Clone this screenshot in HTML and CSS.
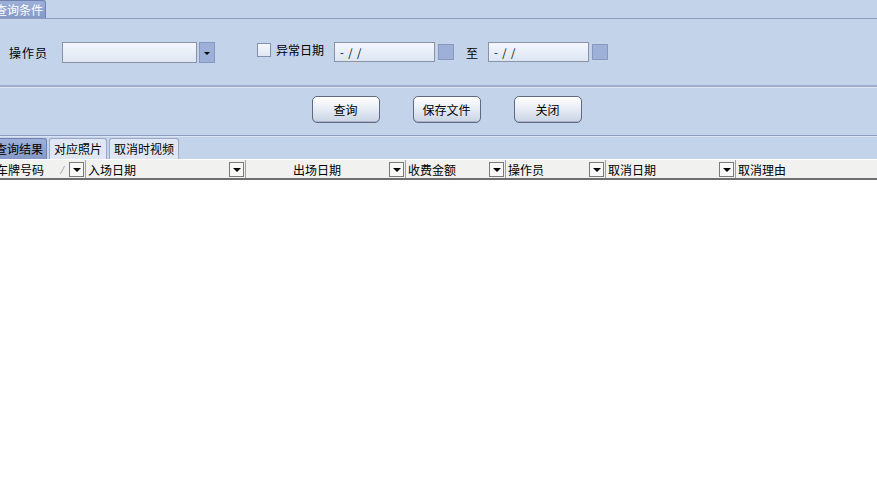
FILE: index.html
```html
<!DOCTYPE html>
<html lang="zh-CN">

<head>
  <meta charset="UTF-8">
  <title>取消记录查询</title>
  <link rel="stylesheet" href="styles.css">
</head>

<body>
  <div class="tab-strip top-strip">
    <span class="tab active first"><span class="tab-text">查询条件</span></span>
  </div>

  <div class="query-panel">
    <span class="label">操作员</span>
    <div class="combo">
      <div class="combo-input"></div>
      <div class="combo-btn"><span class="arrow"></span></div>
    </div>

    <label class="check">
      <span class="check-box"></span>
      <span>异常日期</span>
    </label>
    <div class="date-input">- / /</div>
    <span class="date-btn"></span>
    <span class="to">至</span>
    <div class="date-input">- / /</div>
    <span class="date-btn"></span>
  </div>

  <div class="button-panel">
    <button class="btn">查询</button>
    <button class="btn">保存文件</button>
    <button class="btn">关闭</button>
  </div>

  <div class="tab-strip result-strip">
    <span class="tab active first"><span class="tab-text">查询结果</span></span>
    <span class="tab">对应照片</span>
    <span class="tab">取消时视频</span>
  </div>

  <div class="grid">
    <div class="grid-head">
      <div class="col c1"><span class="col-text cut">车牌号码</span><span class="sort">⁄</span><span class="drop"></span></div>
      <div class="col c2"><span class="col-text">入场日期</span><span class="drop"></span></div>
      <div class="col c3"><span class="col-text right">出场日期</span><span class="drop"></span></div>
      <div class="col c4"><span class="col-text">收费金额</span><span class="drop"></span></div>
      <div class="col c5"><span class="col-text">操作员</span><span class="drop"></span></div>
      <div class="col c6"><span class="col-text">取消日期</span><span class="drop"></span></div>
      <div class="col c7"><span class="col-text">取消理由</span></div>
    </div>
    <div class="grid-body"></div>
  </div>
</body>

</html>
```

FILE: styles.css
```css
:root {
  --panel: #c3d3ea;
  --line: #8e9dbd;
  --tab-on: #8ea3d1;
  --tab-off: #dfe7f4;
  --field-border: #8a93a6;
  --btn-blue: #9cb0d8;
}

html, body {
  height: 100%;
}

body {
  margin: 0;
  font-family: "Noto Sans CJK SC", "Noto Sans", sans-serif;
  font-size: 12px;
  color: #000;
  background: var(--panel);
  display: flex;
  flex-direction: column;
  overflow: hidden;
}

/* tab strips */
.tab-strip {
  display: flex;
  align-items: flex-end;
  border-bottom: 1px solid var(--line);
}

.top-strip {
  height: 18px;
}

.tab {
  height: 18px;
  line-height: 17px;
  padding: 0 4px;
  box-sizing: border-box;
  background: var(--tab-off);
  border: 1px solid #9aa8c6;
  border-bottom: none;
  border-radius: 3px 3px 0 0;
  white-space: nowrap;
  overflow: hidden;
  margin-right: 2px;
}

.tab.active {
  background: linear-gradient(#9db0da, #8599c8);
  color: #fff;
  border-color: #6f82ae;
}

.tab.first {
  padding: 0;
  border-left: none;
  border-radius: 0 3px 0 0;
}

.top-strip .tab.first {
  width: 46px;
}

.result-strip .tab.first {
  width: 47px;
  color: #000;
}

.tab-text {
  display: inline-block;
  margin-left: -5px;
}

/* query panel */
.query-panel {
  height: 66px;
  display: flex;
  align-items: center;
  padding-left: 9px;
  border-bottom: 2px solid #9fadc9;
  box-shadow: 0 1px 0 #dbe4f2;
}

.label {
  letter-spacing: 1px;
  width: 53px;
}

.combo {
  display: flex;
  align-items: center;
  margin-right: 42px;
}

.combo-input {
  width: 133px;
  height: 19px;
  border: 1px solid var(--field-border);
  background: linear-gradient(#f4f7fc, #dde6f3);
}

.combo-btn {
  width: 16px;
  height: 21px;
  margin-left: 2px;
  background: var(--btn-blue);
  border: 1px solid #8797bd;
  box-sizing: border-box;
  display: flex;
  align-items: center;
  justify-content: center;
}

.arrow {
  width: 0;
  height: 0;
  border-left: 3px solid transparent;
  border-right: 3px solid transparent;
  border-top: 3px solid #000;
  margin-top: 3px;
}

.check {
  display: flex;
  align-items: center;
  gap: 5px;
  margin-right: 10px;
  margin-top: -5px;
}

.check-box {
  width: 12px;
  height: 12px;
  border: 1px solid #8390ad;
  background: linear-gradient(#f6f8fc, #e0e7f3);
}

.date-input {
  width: 94px;
  height: 18px;
  line-height: 18px;
  padding-left: 5px;
  border: 1px solid var(--field-border);
  background: linear-gradient(#f4f7fc, #dde6f3);
  font-size: 11px;
  letter-spacing: 1px;
}

.date-btn {
  width: 14px;
  height: 14px;
  margin-left: 3px;
  background: var(--btn-blue);
  border: 1px solid #8797bd;
}

.to {
  margin: 0 10px 0 12px;
}

/* buttons */
.button-panel {
  height: 48px;
  display: flex;
  align-items: center;
  justify-content: center;
  gap: 33px;
  padding-left: 16px;
  border-bottom: 1px solid var(--line);
  box-shadow: 0 1px 0 #dbe4f2;
}

.btn {
  width: 68px;
  height: 27px;
  margin-top: -3px;
  font-family: inherit;
  font-size: 12px;
  color: #000;
  background: linear-gradient(#ffffff, #e9eef6 45%, #c9d3e4);
  border: 1px solid #5f6a80;
  border-radius: 5px;
  box-shadow: inset 0 -1px 0 #aab5c9;
  cursor: pointer;
  padding: 0;
}

/* result tabs */
.result-strip {
  margin-top: 2px;
  height: 21px;
  border-bottom: none;
}

.result-strip .tab {
  height: 21px;
  line-height: 20px;
}

/* grid */
.grid {
  flex: 1;
  display: flex;
  flex-direction: column;
  background: #fff;
}

.grid-head {
  display: flex;
  height: 21px;
  background: #f1f1ef;
  border-top: 1px solid #fff;
  border-bottom: 2px solid #6f6f6f;
  box-sizing: border-box;
}

.col {
  display: flex;
  align-items: center;
  border-right: 1px solid #a0a0a0;
  box-sizing: border-box;
  overflow: hidden;
  white-space: nowrap;
  padding-right: 1px;
}

.col-text {
  flex: 1;
  padding-left: 2px;
}

.col-text.cut {
  margin-left: -6px;
}

.col-text.right {
  text-align: right;
  padding-right: 48px;
}

.sort {
  color: #9a9a9a;
  font-size: 10px;
  margin-right: 6px;
}

.drop {
  width: 13px;
  height: 13px;
  border: 1px solid #7a7a7a;
  background: #f7f7f7;
  position: relative;
  flex: none;
}

.drop::after {
  content: "";
  position: absolute;
  left: 3px;
  top: 5px;
  border-left: 4px solid transparent;
  border-right: 4px solid transparent;
  border-top: 4px solid #000;
}

.c1 { width: 86px; }
.c2 { width: 160px; }
.c3 { width: 160px; }
.c4 { width: 100px; }
.c5 { width: 100px; }
.c6 { width: 130px; }
.c7 { flex: 1; border-right: none; }

.grid-body {
  flex: 1;
}
```
